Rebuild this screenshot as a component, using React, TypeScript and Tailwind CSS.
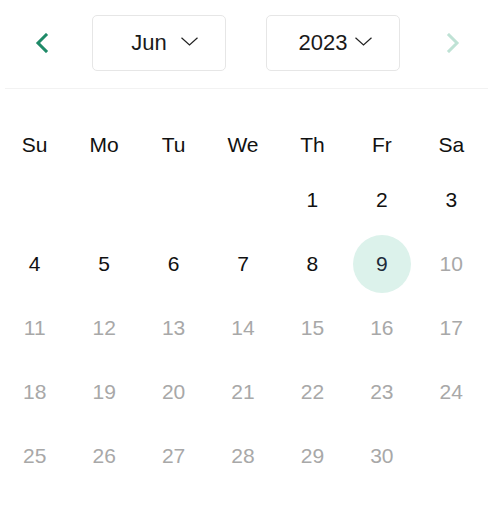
import React from "react";

const weekdays = ["Su", "Mo", "Tu", "We", "Th", "Fr", "Sa"];

function Chevron({ dir }: { dir: "left" | "right" }) {
  return (
    <svg width="16" height="20" viewBox="0 0 16 20" fill="none">
      {dir === "left" ? (
        <path d="M12 2 L4 10 L12 18" stroke="currentColor" strokeWidth="3" strokeLinecap="square" strokeLinejoin="miter" />
      ) : (
        <path d="M4 2 L12 10 L4 18" stroke="currentColor" strokeWidth="3" strokeLinecap="square" strokeLinejoin="miter" />
      )}
    </svg>
  );
}

function Down() {
  return (
    <svg width="17" height="9" viewBox="0 0 17 9" fill="none" className="-mt-[2px] text-[#222]">
      <path d="M0.5 0.8 L8.5 8 L16.5 0.8" stroke="currentColor" strokeWidth="1.2" />
    </svg>
  );
}

function SelectBox({ label }: { label: string }) {
  return (
    <div className="flex h-[56px] w-[134px] items-center rounded-[5px] border border-[#e6e6e6] bg-white pl-[29px] pr-[27px]">
      <span className="flex-1 pr-[5px] text-center text-[22px] text-[#1a1a1a]">{label}</span>
      <Down />
    </div>
  );
}

export default function App() {
  const cells: (number | null)[] = [null, null, null, null, ...Array.from({ length: 30 }, (_, i) => i + 1)];
  return (
    <div className="h-[508px] w-[494px] bg-white" style={{ fontFamily: '"Liberation Sans", Arial, sans-serif' }}>
      <div className="flex h-[88px] items-center pl-[22px] pb-[3px]">
        <button className="flex h-10 w-10 items-center justify-center text-[#1f8a68]">
          <Chevron dir="left" />
        </button>
        <div className="ml-[30px]">
          <SelectBox label="Jun" />
        </div>
        <div className="ml-[40px]">
          <SelectBox label="2023" />
        </div>
        <button className="ml-[33px] flex h-10 w-10 items-center justify-center text-[#bfe2d5]">
          <Chevron dir="right" />
        </button>
      </div>
      <div className="mx-[5px] h-px w-[483px] bg-[#f2f2f2]" />
      <div className="grid w-[486px] grid-cols-7 pt-[32px]">
        {weekdays.map((d) => (
          <div key={d} className="flex h-[47px] items-center justify-center text-[21px] text-[#111]">
            {d}
          </div>
        ))}
        {cells.map((n, i) => (
          <div key={i} className="flex h-[64px] items-center justify-center">
            {n !== null &&
              (n === 9 ? (
                <div className="flex h-[58px] w-[58px] items-center justify-center rounded-full bg-[#dcf2eb] text-[21px] text-[#1e2a3a]">
                  {n}
                </div>
              ) : (
                <span className={`text-[21px] ${n <= 9 ? "text-[#111]" : "text-[#a8a8a8]"}`}>{n}</span>
              ))}
          </div>
        ))}
      </div>
    </div>
  );
}
